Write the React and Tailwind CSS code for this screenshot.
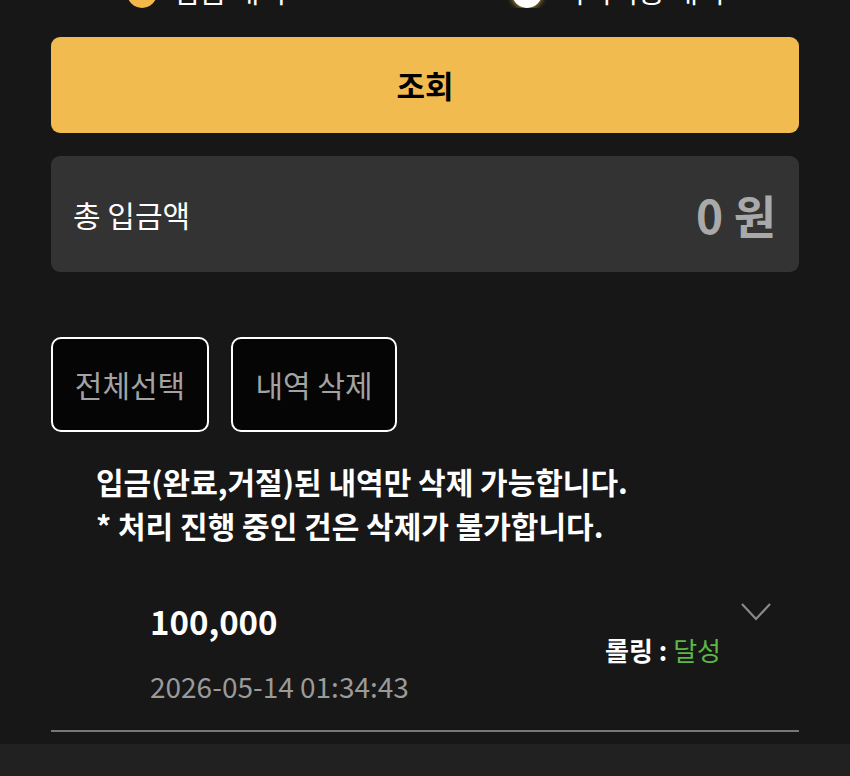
import React from 'react';

const font = { fontFamily: '"Noto Sans CJK KR", "Noto Sans", sans-serif' };

const Radio = ({ checked, label }) => (
  <div className="flex items-end gap-[16px]">
    <span
      className={
        checked
          ? 'w-[30px] h-[30px] rounded-full bg-[#f2b84a]'
          : 'w-[30px] h-[30px] rounded-full bg-white shadow-[0_0_6px_#f2b84a]'
      }
    />
    <span className="mb-[3px] text-[29px] leading-[30px] text-white">{label}</span>
  </div>
);

const App = () => {
  return (
    <div className="w-[850px] h-[776px] bg-[#171717] overflow-hidden flex flex-col" style={font}>
      {/* radio row, mostly scrolled off the top */}
      <div className="h-[8px] overflow-hidden flex flex-col justify-end shrink-0">
        <div className="flex shrink-0 pl-[127px] gap-[226px]">
          <Radio checked label="입금 내역" />
          <Radio label="미처리중 내역" />
        </div>
      </div>

      <div className="px-[51px] flex flex-col">
        <button className="mt-[29px] h-[96px] w-full rounded-[9px] bg-[#f2bb4f] text-black text-[31px] font-bold">
          조회
        </button>

        <div className="mt-[23px] h-[116px] rounded-[9px] bg-[#333333] flex items-center justify-between pl-[22px] pr-[23px]">
          <span className="text-white text-[30px]">총 입금액</span>
          <span className="text-[#a9a9a9] text-[46px] font-bold">0 원</span>
        </div>

        <div className="mt-[65px] flex gap-[22px]">
          <button className="h-[95px] w-[158px] rounded-[10px] border-2 border-white bg-[#050505] text-[#a3a3a3] text-[30px]">
            전체선택
          </button>
          <button className="h-[95px] w-[166px] rounded-[10px] border-2 border-white bg-[#050505] text-[#a3a3a3] text-[30px]">
            내역 삭제
          </button>
        </div>

        <div className="mt-[27px] pl-[45px] text-white text-[30px] font-bold leading-[44px]">
          <p>입금(완료,거절)된 내역만 삭제 가능합니다.</p>
          <p>* 처리 진행 중인 건은 삭제가 불가합니다.</p>
        </div>

        <div className="mt-[53px] flex border-b-2 border-[#777777] pb-[28px]">
          <div className="flex-1 pl-[99px] flex flex-col">
            <span className="text-white text-[33px] font-bold leading-[42px]">100,000</span>
            <span className="mt-[28px] text-[#9a9a9a] text-[28px] leading-[32px]">2026-05-14 01:34:43</span>
          </div>
          <div className="mt-[34px] text-[26px] leading-[32px]">
            <span className="text-white font-bold">롤링 : </span>
            <span className="text-[#5cb845]">달성</span>
          </div>
          <div className="ml-[20px] mr-[28px] mt-[3px]">
            <svg width="30" height="18" viewBox="0 0 30 18" fill="none" stroke="#8a8a8a" strokeWidth="2.2">
              <path d="M1 1 L15 16 L29 1" />
            </svg>
          </div>
        </div>
      </div>

      <div className="mt-auto h-[32px] bg-[#212121] shrink-0" />
    </div>
  );
};

export default App;
